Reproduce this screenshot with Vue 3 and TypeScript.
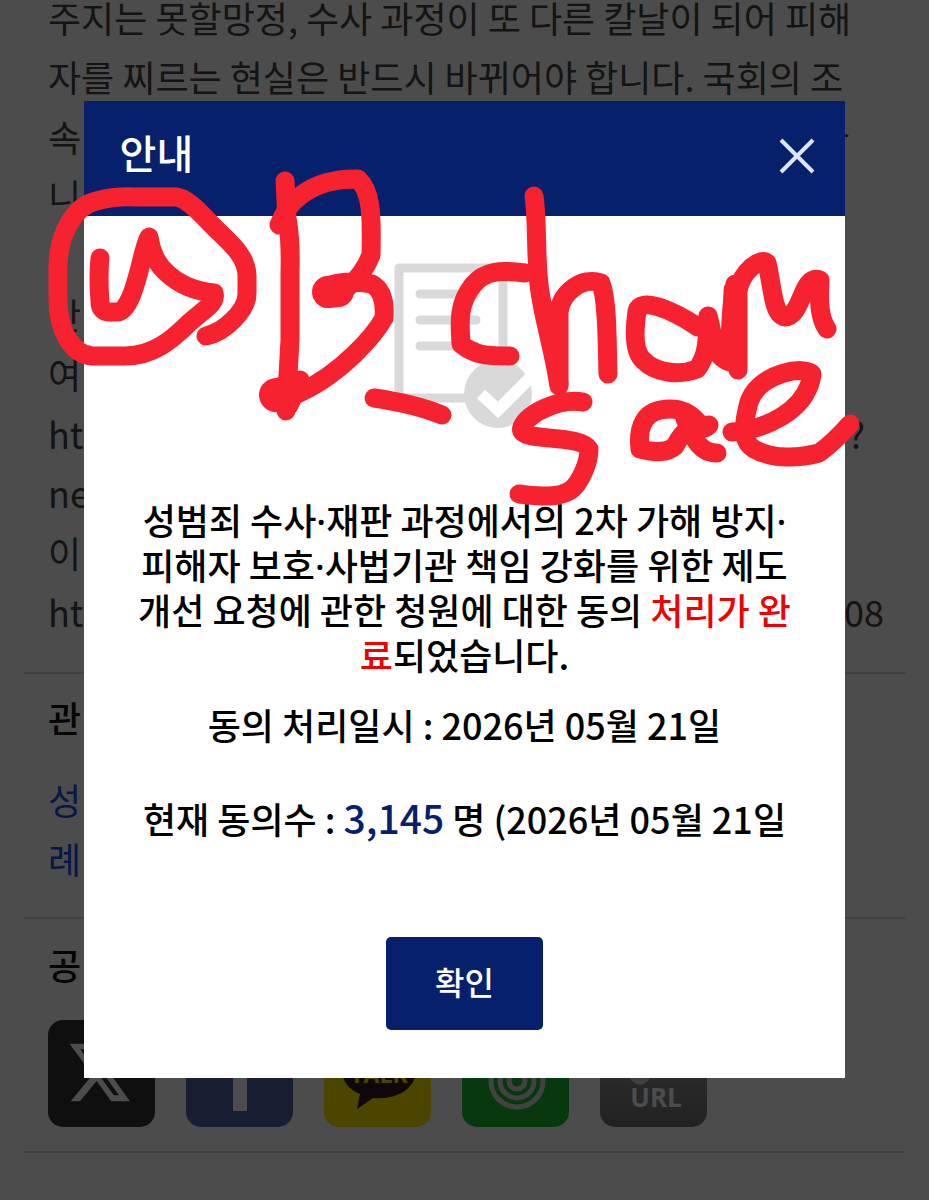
<script setup lang="ts">
import { ref } from 'vue'

interface BodyLine {
  head: string
  tail?: string
  kind?: string
}

const open = ref(true)

const lines: BodyLine[] = [
  { head: '주지는 못할망정, 수사 과정이 또 다른 칼날이 되어 피해' },
  { head: '자를 찌르는 현실은 반드시 바뀌어야 합니다. 국회의 조' },
  { head: '속', tail: '다', kind: 'syllable' },
  { head: '니' },
  { head: '' },
  { head: '안' },
  { head: '여' },
  { head: 'ht', tail: '?', kind: 'mark' },
  { head: 'ne' },
  { head: '이' },
  { head: 'ht', tail: '08', kind: 'digits' },
]
</script>

<template>
  <div class="screen">
    <main class="page">
      <section class="block petition">
        <p v-for="(line, i) in lines" :key="i" class="line">
          <span>{{ line.head }}</span>
          <span v-if="line.tail" :class="['tail', line.kind]">{{ line.tail }}</span>
        </p>
      </section>
      <section class="block related">
        <h2>관</h2>
        <a href="#">성<br />례</a>
      </section>
      <section class="block share">
        <h2>공</h2>
        <div class="icons">
          <button type="button" class="icon x" aria-label="X">
            <svg viewBox="0 0 107 107">
              <path transform="translate(18 17) scale(2.8 2.95)" d="M18.244 2.25h3.308l-7.227 8.26 8.502 11.24H16.17l-5.214-6.817L4.99 21.75H1.68l7.73-8.835L1.254 2.25H8.08l4.713 6.231zm-1.161 17.52h1.833L7.084 4.126H5.117z" fill="#fff" />
            </svg>
          </button>
          <button type="button" class="icon facebook" aria-label="Facebook">
            <svg viewBox="0 0 107 107">
              <path d="M47 91V55H36V41h11V32q0-17 17-17h11v14h-7q-6 0-6 6v6h13l-2 14H61v36z" fill="#fff" />
            </svg>
          </button>
          <button type="button" class="icon talk" aria-label="카카오톡">
            <svg viewBox="0 0 107 107">
              <path d="M55 22c-22 0-37 12-37 28 0 11 7 20 18 24l-3 15 16-11c25 2 43-10 43-28S77 22 55 22z" fill="#351a20" />
              <text x="55" y="63" text-anchor="middle" class="talk-text">TALK</text>
            </svg>
          </button>
          <button type="button" class="icon band" aria-label="네이버 밴드">
            <svg viewBox="0 0 107 107" fill="none" stroke="#ddd" stroke-width="5">
              <circle cx="55" cy="61" r="26" />
              <circle cx="55" cy="61" r="17" />
              <circle cx="55" cy="61" r="8" />
            </svg>
          </button>
          <button type="button" class="icon url" aria-label="URL">
            <svg viewBox="0 0 107 107">
              <path d="M35 49 52 32M54 26l7-7q7-6 14 0t0 14L61 47M46 32 34 44q-7 7 0 14t13-2l7-7" fill="none" stroke="#ddd" stroke-width="7" />
              <text x="56" y="87" text-anchor="middle" class="url-text">URL</text>
            </svg>
          </button>
        </div>
      </section>
    </main>

    <div v-if="open" class="overlay">
      <div class="dialog" role="dialog" aria-modal="true" aria-labelledby="dialog-title">
        <header class="dialog-head">
          <h1 id="dialog-title">안내</h1>
          <button type="button" class="close" aria-label="닫기" @click="open = false">
            <svg viewBox="0 0 36 36"><path d="M2 2 34 34M34 2 2 34" stroke="#dfe4f2" stroke-width="4" /></svg>
          </button>
        </header>
        <div class="dialog-body">
          <svg class="document" viewBox="0 0 140 170">
            <g fill="none" stroke="#d9d9d9">
              <path d="M80 135H5V5h104v80" stroke-width="9" stroke-linejoin="round" />
              <path d="M26 31h56M26 57h56M26 83h56" stroke-width="9" stroke-linecap="round" />
            </g>
            <circle cx="104" cy="131" r="34" fill="#d9d9d9" />
            <path d="m87 131 17 16 36-36" fill="none" stroke="#fff" stroke-width="12" />
          </svg>
          <p class="message">
            성범죄 수사<span class="dot">·</span>재판 과정에서의 2차 가해 방지<span class="dot">·</span><wbr />피해자
            보호<span class="dot">·</span>사법기관 책임 강화를 위한 제도 개선 요청에 관한 청원에 대한 동의
            <em>처리가 완료</em>되었습니다.
          </p>
          <p class="date">동의 처리일시 : 2026년 05월 21일</p>
          <p class="count">현재 동의수 : <strong>3,145</strong> 명 (2026년 05월 21일</p>
          <button type="button" class="confirm" @click="open = false">확인</button>
        </div>
      </div>
    </div>

    <svg class="doodle" viewBox="0 0 929 520" aria-hidden="true">
      <g fill="none" stroke="#f6222f" stroke-width="19" stroke-linecap="round" stroke-linejoin="round">
        <path d="M100 258Q98 277 100 302Q100 312 110 312H117Q125 312 132 294C141 270 143 248 149 237C151 252 156 264 168 274C180 285 194 291 214 293Q216 300 208 307L190 322C172 340 153 356 125 356H92C71 354 58 329 58 300V265C59 232 75 206 96 201Q115 196 135 197H176C188 198 201 214 215 228C229 242 247 256 247 276V294C247 310 225 332 206 336" />
        <path d="M285 181C286 196 286 206 287 218Q291 240 290 272V340L286 411" />
        <path d="M279 225C286 205 308 178 358 179C371 191 372 212 371 255C366 268 357 280 349 286Q337 298 329 298Q322 296 323 290C332 280 357 281 372 284Q386 292 384 318C374 336 341 374 299 393Q280 402 272 398C264 390 276 388 300 380" />
        <path d="M328 292l10-1" stroke-width="32" />
        <path d="M276 395l8-1" stroke-width="34" />
        <path d="M288 406l12-24" stroke-width="20" />
        <path d="M374 398Q415 404 442 415" />
        <path d="M525 273C502 270 485 270 473 285C457 305 460 325 461 344C475 356 489 356 510 356" />
        <path d="M534 196C538 224 535 260 540 292C545 325 553 347 559 386V312C561 293 582 276 601 283C608 302 607 347 608 374" />
        <path d="M551 320 559 384" />
        <path d="M698 327C671 309 641 297 637 311C634 332 634 352 643 360C655 373 679 376 697 369C710 353 707 328 708 316C715 340 712 356 730 362Q730 310 735 284L738 370V291C742 270 761 257 767 263C773 289 773 315 785 317C803 316 801 274 820 280C819 302 819 317 827 329" />
        <path d="M734 290V360" stroke-width="21" />
        <path d="M583 402C561 398 529 412 522 427C515 443 580 433 589 449C589 463 580 483 571 490C557 499 539 496 519 494" />
        <path d="M709 425C699 437 699 403 660 410C641 414 638 433 640 449C656 453 667 453 675 446C683 431 688 425 709 425M685 419C695 442 701 453 717 453" />
        <path d="M732 432C763 430 807 412 812 374C807 366 760 371 749 402C741 432 744 443 754 449C774 460 800 458 819 453Q832 444 850 424" />
      </g>
    </svg>
  </div>
</template>

<style>
html,
body {
  margin: 0;
  background: #fff;
}
</style>

<style scoped>
.screen {
  height: 100vh;
  overflow: hidden;
  font-family: "Noto Sans CJK KR", "Noto Sans", sans-serif;
  font-size: 36px;
}
p,
h1,
h2 {
  margin: 0;
  font-size: 36px;
  font-weight: 500;
}
button {
  margin: 0;
  padding: 0;
  border: 0;
  font-family: inherit;
  cursor: pointer;
}
.page {
  margin-top: -12px;
  padding: 0 24px;
}
.block {
  padding: 0 21px 0 24px;
  border-bottom: 2px solid #d2d2d2;
}
.petition {
  padding-bottom: 31px;
}
.line {
  display: flex;
  justify-content: space-between;
  height: 1.65em;
  line-height: 1.65;
  font-weight: 400;
  white-space: nowrap;
  color: #444;
}
.mark {
  margin-right: 19px;
}
.syllable {
  margin-right: 35px;
}
.related h2,
.share h2 {
  line-height: 52px;
  color: #111;
}
.related {
  padding-top: 17px;
  padding-bottom: 29px;
}
.related a {
  display: block;
  margin-top: 27px;
  line-height: 59px;
  color: #1150f0;
  text-decoration: none;
}
.share {
  padding-top: 19px;
  padding-bottom: 24px;
}
.icons {
  display: flex;
  gap: 31px;
  margin-top: 30px;
}
.icon {
  width: 107px;
  height: 107px;
  border-radius: 15px;
  overflow: hidden;
}
.icon svg {
  display: block;
}
.x {
  background: #353535;
}
.facebook {
  background: #4d67a6;
}
.talk {
  background: #fae600;
}
.band {
  background: #1bc02f;
}
.url {
  background: linear-gradient(#b0b0b0, #717171);
}
.talk-text {
  font: 700 23px "Open Sans", sans-serif;
  fill: #fae600;
}
.url-text {
  font: 700 26px "Open Sans", sans-serif;
  fill: #fff;
}
.overlay {
  position: fixed;
  inset: 0;
  display: flex;
  justify-content: center;
  align-items: flex-start;
  padding-top: 101px;
  background: rgba(0, 0, 0, 0.7);
}
.dialog {
  width: 82%;
  background: #fff;
}
.dialog-head {
  display: flex;
  align-items: center;
  justify-content: space-between;
  padding: 21px 30px 26px 36px;
  background: #06206c;
  color: #fff;
}
.dialog-head h1 {
  padding-bottom: 8px;
  font-size: 40px;
  line-height: 60px;
}
.close {
  display: flex;
  background: none;
}
.close svg {
  width: 36px;
  height: 36px;
}
.dialog-body {
  display: flex;
  flex-direction: column;
  align-items: center;
  padding: 47px 49px 48px;
  text-align: center;
  line-height: 45px;
  color: #000;
}
.document {
  width: 140px;
  height: 170px;
}
.message {
  margin-top: 64px;
}
.message em {
  color: #f00000;
  font-style: normal;
}
.dot {
  font-family: "Noto Sans", sans-serif;
  line-height: 1;
}
.date {
  margin-top: 25px;
}
.count {
  margin-top: 49px;
}
.count strong {
  font-size: 39px;
  font-weight: 500;
  line-height: 1;
  color: #06206c;
}
.confirm {
  width: 157px;
  height: 93px;
  margin-top: 96px;
  padding-bottom: 5px;
  border-radius: 5px;
  background: #06206c;
  color: #fff;
  font-size: 32px;
  font-weight: 500;
}
.doodle {
  position: absolute;
  top: 0;
  left: 0;
  width: 929px;
  height: 520px;
  pointer-events: none;
}
</style>
